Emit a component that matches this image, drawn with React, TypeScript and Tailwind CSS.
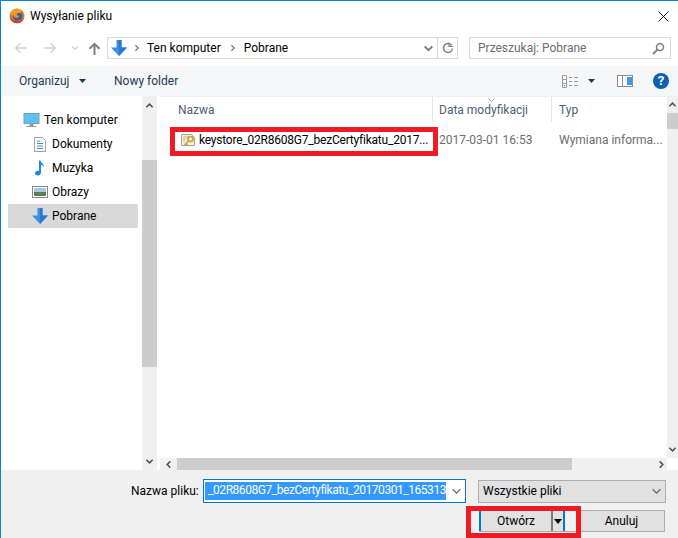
import { ReactNode } from "react";

function Firefox() {
  return (
    <svg width="16" height="16" viewBox="0 0 16 16">
      <circle cx="8" cy="8" r="7.500" fill="#e8742a" />
      <circle cx="8.600" cy="8" r="4.800" fill="#3a5f9c" />
      <path d="M2 5c1-3 4-4.500 7-4.300 2.500.2 4.500 1.800 5.500 4-1-1-2.300-1.700-3.700-1.500 1 .8 1.400 1.800 1.200 3-.5-1-1.500-1.500-2.500-1.300-1 .3-2 .8-2 1.700 0 1 1.500 1.200 2.700 1.200-.3 1.500-2 2.200-3.500 1.700C4.700 9.100 4 7.500 4.300 6 3.500 6.300 3 7.200 3 8.200 2.300 7.500 1.900 6.200 2 5z" fill="#f6a021" />
      <path d="M1 9c.7 3.500 3.700 6 7 6s6-2.200 6.800-5.500c-1 2-3 3.700-5.800 3.700C5.500 13.200 2.800 11.800 1 9z" fill="#c8401f" />
    </svg>
  );
}

function DownArrow({ size = 16 }: { size?: number }) {
  return (
    <svg width={size} height={size} viewBox="0 0 16 16">
      <path d="M5.500 0h5v7.500H16L8 16 0 7.500h5.500z" fill="#3d8fe0" />
      <path d="M8 0h2.500v7.500H16L8 16z" fill="#2a78cc" />
    </svg>
  );
}

function Chevron({ dir, color, size = 10, weight = 1.7 }: { dir: "up" | "down" | "left" | "right"; color: string; size?: number; weight?: number }) {
  const d = {
    up: "M1.500 7L5 3.500 8.500 7",
    down: "M1.500 3L5 6.500 8.500 3",
    left: "M7 1.500L3.500 5 7 8.500",
    right: "M3 1.500L6.500 5 3 8.500",
  }[dir];
  return (
    <svg width={size} height={size} viewBox="0 0 10 10">
      <path d={d} fill="none" stroke={color} strokeWidth={weight} />
    </svg>
  );
}

function Arrow({ flip, color }: { flip?: boolean; color: string }) {
  return (
    <svg width="13" height="12" viewBox="0 0 13 12" className={flip ? "-scale-x-100" : ""}>
      <path d="M13 6H2M6.500 1.200L1.700 6l4.800 4.800" fill="none" stroke={color} strokeWidth="1.600" />
    </svg>
  );
}

function NavRow({ icon, label, indent, selected }: { icon: ReactNode; label: string; indent: string; selected?: boolean }) {
  return (
    <div className={`h-6 flex items-center ${indent} ${selected ? "bg-[#d9d9d9]" : ""}`}>
      {icon}
      <span className="text-black">{label}</span>
    </div>
  );
}

function ScrollBtn({ dir, className }: { dir: "up" | "down" | "left" | "right"; className: string }) {
  return (
    <div className={`flex items-center justify-center shrink-0 ${className}`}>
      <Chevron dir={dir} color="#505050" size={9} />
    </div>
  );
}

export default function App() {
  return (
    <div className="relative w-[678px] h-[538px] overflow-hidden bg-white border-l border-t border-[#0f7fd6] flex flex-col text-[12px] leading-4 font-['Roboto','Open_Sans',sans-serif]">
      {/* title bar */}
      <div className="h-[30px] shrink-0 flex items-center pl-[8px] pr-[9px]">
        <Firefox />
        <span className="ml-[5px] text-black">Wysyłanie pliku</span>
        <svg width="11" height="11" viewBox="0 0 11 11" className="ml-auto">
          <path d="M.5.500l10 10M10.500.500l-10 10" stroke="#111" strokeWidth="1" />
        </svg>
      </div>

      {/* nav row */}
      <div className="h-[35px] shrink-0 flex items-start pt-[6px] pl-[13px] pr-[6px]">
        <div className="h-[22px] flex items-center">
          <Arrow color="#d5d5d5" />
          <span className="w-[17px]" />
          <Arrow flip color="#d5d5d5" />
          <span className="w-[14px]" />
          <Chevron dir="down" color="#d5d5d5" size={8} />
          <span className="w-[9px]" />
          <svg width="13" height="13" viewBox="0 0 13 13">
            <path d="M6.500 13V2M1.500 6.800l5-5 5 5" fill="none" stroke="#7f7f7f" strokeWidth="2" />
          </svg>
        </div>
        <div className="ml-[6px] w-[351px] h-[22px] border border-[#d9d9d9] flex items-center">
          <span className="ml-[3px]"><DownArrow /></span>
          <span className="ml-[6px]"><Chevron dir="right" color="#808080" size={8} /></span>
          <span className="ml-[6px] text-black">Ten komputer</span>
          <span className="ml-[8px]"><Chevron dir="right" color="#808080" size={8} /></span>
          <span className="ml-[7px] text-black">Pobrane</span>
          <span className="ml-auto mr-[3px]"><Chevron dir="down" color="#7a7a7a" size={11} /></span>
          <div className="h-full w-[20px] border-l border-[#d9d9d9] flex items-center justify-center">
            <svg width="12" height="12" viewBox="0 0 12 12">
              <path d="M9.800 3.500A4.500 4.500 0 1 0 10.500 6.500" fill="none" stroke="#808080" strokeWidth="1.500" />
              <path d="M7 .5V4.500h3.800" fill="none" stroke="#808080" strokeWidth="1.200" />
            </svg>
          </div>
        </div>
        <div className="ml-[11px] w-[202px] h-[22px] border border-[#d9d9d9] flex items-center pl-[8px] pr-[5px] text-[#6d6d6d]">
          Przeszukaj: Pobrane
          <svg width="13" height="13" viewBox="0 0 13 13" className="ml-auto">
            <circle cx="8" cy="5" r="3.500" fill="none" stroke="#808080" strokeWidth="1.500" />
            <path d="M5.500 7.500L1 12" stroke="#808080" strokeWidth="2" />
          </svg>
        </div>
      </div>

      {/* toolbar */}
      <div className="h-[30px] shrink-0 bg-[#f5f6f7] flex items-center pl-[18px] text-[#1e395b]">
        <span className="w-[54px]">Organizuj</span>
        <svg width="7" height="4" viewBox="0 0 7 4" className="ml-[6px]"><path d="M0 0h7L3.500 4z" fill="#1e395b" /></svg>
        <span className="ml-[28px]">Nowy folder</span>
        <svg width="17" height="13" viewBox="0 0 17 13" className="ml-auto">
          <path d="M.5.500h4v12h-4zM.5 4.500h4M.5 8.500h4" fill="#fff" stroke="#9a9a9a" />
          <path d="M7 2.500h3M12 2.500h4M7 6.500h3M12 6.500h4M7 10.500h3M12 10.500h4" stroke="#9a9a9a" />
          <rect x="2" y="10" width="1" height="1" fill="#c93a2a" />
        </svg>
        <svg width="7" height="4" viewBox="0 0 7 4" className="ml-[9px]"><path d="M0 0h7L3.500 4z" fill="#1e395b" /></svg>
        <svg width="16" height="12" viewBox="0 0 16 12" className="ml-[22px]">
          <rect x=".5" y=".5" width="15" height="11" fill="#fff" stroke="#8c8c8c" />
          <path d="M5.500 1v10" stroke="#8c8c8c" />
          <rect x="10" y="2" width="5" height="8" fill="#3d9be9" />
        </svg>
        <div className="ml-[20px] mr-[9px] w-4 h-4 rounded-full bg-[#0d5fb3] text-white font-bold text-[13px] flex items-center justify-center">?</div>
      </div>

      {/* panes */}
      <div className="flex-1 min-h-0 flex">
        <div className="w-[141px] shrink-0 pt-[12px] pl-[7px] pr-[4px]">
          <NavRow
            indent="pl-[15px]"
            label="Ten komputer"
            icon={
              <svg width="17" height="15" viewBox="0 0 17 15" className="mr-[4px]">
                <rect x="1" y=".5" width="15" height="10" fill="#5cc0f5" stroke="#7aa0b8" />
                <path d="M7 11h3v2H7zM3.500 13.500h10" fill="#8aa0ae" stroke="#8aa0ae" />
              </svg>
            }
          />
          <NavRow
            indent="pl-[26px]"
            label="Dokumenty"
            icon={
              <svg width="12" height="15" viewBox="0 0 12 15" className="mr-[6px]">
                <path d="M.5.500h8l3 3v11H.5z" fill="#fff" stroke="#9aa5ad" />
                <path d="M3 4h3M3 6.500h6M3 9h6M3 11.500h6" stroke="#3d8fc8" />
              </svg>
            }
          />
          <NavRow
            indent="pl-[26px]"
            label="Muzyka"
            icon={
              <svg width="12" height="16" viewBox="0 0 12 16" className="mr-[6px]">
                <path d="M5 .5h1.600c.3 2.500 4 3.500 3.400 7-.5-1.500-2-2.500-3-2.700V12.500c0 1.800-1.700 3-3.500 3C2.200 15.500 1 14.700 1 13.300 1 11.500 3 10.500 5 11z" fill="#1e88e5" />
              </svg>
            }
          />
          <NavRow
            indent="pl-[24px]"
            label="Obrazy"
            icon={
              <svg width="16" height="12" viewBox="0 0 16 12" className="mr-[4px]">
                <rect x=".5" y=".5" width="15" height="11" fill="#fff" stroke="#8a8a8a" />
                <rect x="2" y="2" width="12" height="4" fill="#a8c8e0" />
                <rect x="2" y="6" width="12" height="4" fill="#5c7f5a" />
              </svg>
            }
          />
          <NavRow indent="pl-[24px]" label="Pobrane" selected icon={<span className="mr-[4px] flex"><DownArrow /></span>} />
        </div>

        {/* sidebar scrollbar */}
        <div className="w-[15px] shrink-0 bg-[#f0f0f0] flex flex-col">
          <ScrollBtn dir="up" className="h-[18px]" />
          <div className="h-[46px]" />
          <div className="h-[207px] bg-[#cdcdcd]" />
          <div className="flex-1" />
          <ScrollBtn dir="down" className="h-[18px]" />
        </div>

        {/* file list */}
        <div className="flex-1 min-w-0 flex flex-col pl-[3px]">
          <div className="flex-1 min-h-0 flex">
            <div className="flex-1 min-w-0 flex flex-col border-t border-[#f0f0f0] relative">
              <div className="h-[25px] flex text-[#4c607a]">
                <div className="w-[273px] pl-[18px] pt-[5px] border-r border-[#e5e5e5]">Nazwa</div>
                <div className="w-[119px] pl-[6px] pt-[5px] border-r border-[#e5e5e5] relative">
                  Data modyfikacji
                  <svg width="7" height="4" viewBox="0 0 7 4" className="absolute left-[55px] top-[1px]">
                    <path d="M.5.500L3.500 3.500 6.500.500" fill="none" stroke="#a0a0a0" />
                  </svg>
                </div>
                <div className="pl-[7px] pt-[5px]">Typ</div>
              </div>
              <div className="mt-[7px] h-[22px] flex items-center text-[#6d6d6d]">
                <div className="w-[273px] flex items-center pl-[20px] text-black">
                  <svg width="16" height="16" viewBox="0 0 16 16" className="mr-[3px] shrink-0">
                    <path d="M1.500 2.500h10l3 3v8h-13z" fill="#f4f0e4" stroke="#a8a090" />
                    <path d="M3 5h6M3 7h3M3 9h2" stroke="#b8b0a0" />
                    <circle cx="10.500" cy="7" r="2.500" fill="none" stroke="#d9a020" strokeWidth="1.600" />
                    <path d="M9 8.500L4.500 13M6 11.500l1.500 1.500" stroke="#d9a020" strokeWidth="1.600" />
                  </svg>
                  <span className="whitespace-nowrap tracking-[-0.22px]">keystore_02R8608G7_bezCertyfikatu_2017...</span>
                </div>
                <div className="w-[119px] pl-[6px] whitespace-nowrap">2017-03-01 16:53</div>
                <div className="pl-[7px] whitespace-nowrap">Wymiana informa...</div>
              </div>
            </div>
            {/* file list scrollbar */}
            <div className="w-[11px] shrink-0 bg-[#f0f0f0] flex flex-col">
              <ScrollBtn dir="up" className="h-[17px]" />
              <div className="h-[16px] bg-[#cdcdcd]" />
              <div className="flex-1" />
              <ScrollBtn dir="down" className="h-[17px]" />
            </div>
          </div>
          {/* horizontal scrollbar */}
          <div className="h-[12px] shrink-0 flex">
            <div className="flex-1 bg-[#f0f0f0] flex">
              <ScrollBtn dir="left" className="w-[17px]" />
              <div className="w-[395px] bg-[#cdcdcd]" />
              <div className="flex-1" />
              <ScrollBtn dir="right" className="w-[12px]" />
            </div>
            <div className="w-[11px]" />
          </div>
        </div>
      </div>

      {/* bottom panel */}
      <div className="h-[68px] shrink-0 bg-[#f0f0f0] pt-[9px] flex flex-col">
        <div className="flex items-center h-[24px]">
          <span className="ml-[130px] w-[72px] text-black">Nazwa pliku:</span>
          <div className="w-[263px] h-[24px] border border-[#0078d7] bg-white flex items-center pl-[1px] pr-[3px]">
            <div className="w-[241px] h-[18px] bg-[#3399ff] text-white flex justify-end">
              <span className="whitespace-nowrap tracking-[-0.45px]">_02R8608G7_bezCertyfikatu_20170301_165313</span>
            </div>
            <span className="ml-auto"><Chevron dir="down" color="#666" size={11} weight={1.1} /></span>
          </div>
          <div className="ml-[12px] w-[188px] h-[23px] bg-[#e1e1e1] border border-[#adadad] flex items-center pl-[4px] pr-[3px] text-black">
            Wszystkie pliki
            <span className="ml-auto"><Chevron dir="down" color="#666" size={11} weight={1.1} /></span>
          </div>
        </div>
        <div className="mt-[7px] h-[22px] flex justify-end pr-[13px]">
          <div className="w-[99px] h-[22px] flex bg-[#e1e1e1] border-y border-[#adadad] text-black">
            <div className="w-[72px] border-l-2 border-[#0078d7] flex items-center justify-center">Otwórz</div>
            <div className="w-[14px] border-l-2 border-[#7a7a7a] border-r-2 border-r-[#0078d7] flex items-center justify-center">
              <svg width="8" height="5" viewBox="0 0 8 5"><path d="M0 0h8L4 5z" fill="#000" /></svg>
            </div>
            <div className="flex-1 bg-[#f0f0f0]" />
          </div>
          <div className="w-[87px] h-[22px] bg-[#e1e1e1] border border-[#adadad] flex items-center justify-center text-black">Anuluj</div>
        </div>
      </div>

      {/* red annotations */}
      <div className="absolute left-[169px] top-[126px] w-[268px] h-[29px] border-[5px] border-[#ed1c24]" />
      <div className="absolute left-[465px] top-[505px] w-[115px] h-[32px] border-[5px] border-[#ed1c24]" />
    </div>
  );
}
